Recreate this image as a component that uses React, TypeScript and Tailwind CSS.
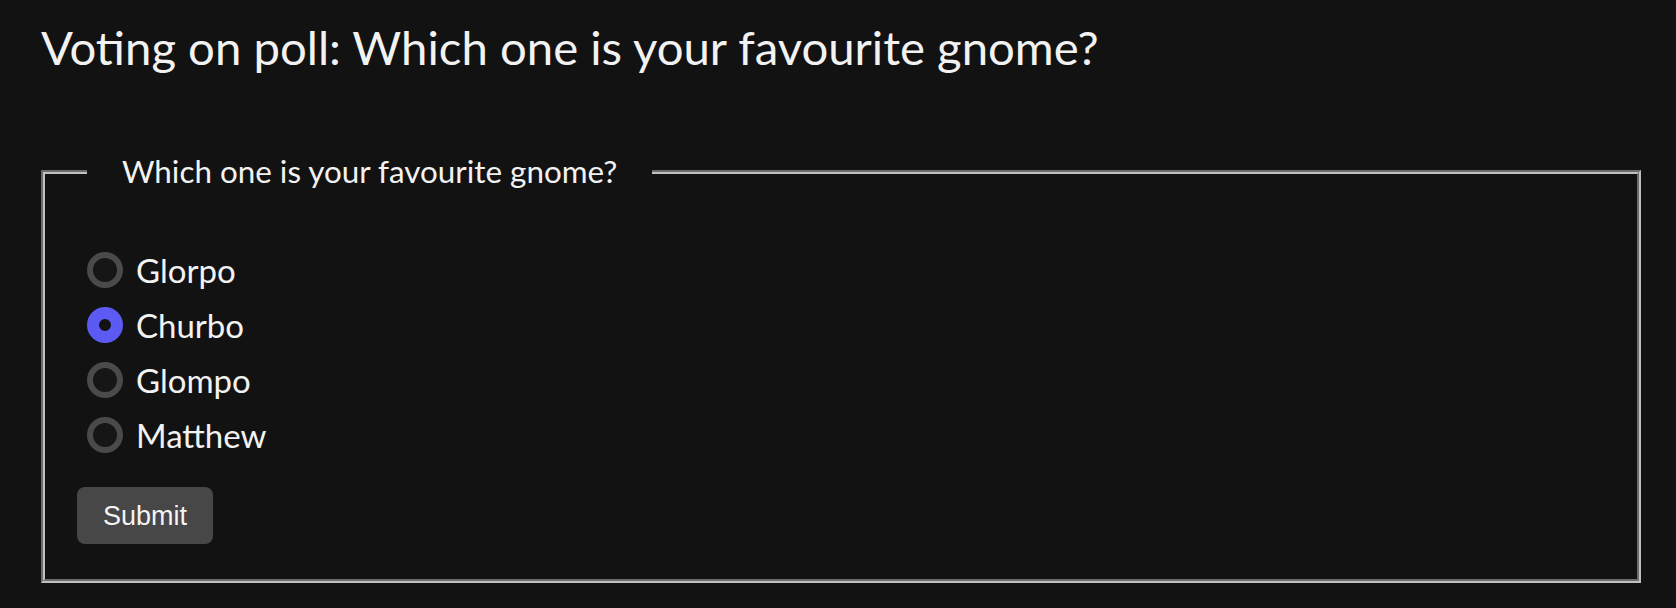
import { useState } from 'react';

const options = ['Glorpo', 'Churbo', 'Glompo', 'Matthew'];

const App = () => {
  const [choice, setChoice] = useState('Churbo');

  return (
    <div className="min-h-screen w-full bg-[#121212] text-[#f2f2f2] pl-[41px] pr-[35px] pt-[19px] font-['Lato','Noto_Sans',sans-serif]">
      <h1 className="text-[47.3px] leading-[1.2] font-normal m-0">
        Voting on poll: Which one is your favourite gnome?
      </h1>

      <form className="mt-[77px]" onSubmit={(e) => e.preventDefault()}>
        <fieldset className="border-[4px] [border-style:groove] border-[#c0c0c0] px-[32px] pt-[60px] pb-[35px] m-0 min-w-0">
          <legend className="text-[31.4px] leading-[1.2] px-[35px] ml-[10px]">
            Which one is your favourite gnome?
          </legend>

          <div className="flex flex-col gap-[15px] pl-[10px]">
            {options.map((opt) => (
              <label key={opt} className="flex items-center h-[40px] gap-[13px] text-[33px] leading-[1.2] cursor-pointer">
                <input
                  type="radio"
                  name="gnome"
                  value={opt}
                  checked={choice === opt}
                  onChange={() => setChoice(opt)}
                  className="appearance-none m-0 shrink-0 w-[36px] h-[36px] rounded-full border-[6px] border-[#4a4a4a] bg-[#161616] checked:border-[12px] checked:border-[#5b5bf3] checked:bg-[#121212]"
                />
                {opt}
              </label>
            ))}
          </div>

          <button
            type="submit"
            className="mt-[32px] w-[136px] h-[57px] rounded-[8px] bg-[#474747] text-[#f4f4f4] text-[27px] font-['Liberation_Sans',Arial,sans-serif]"
          >
            Submit
          </button>
        </fieldset>
      </form>
    </div>
  );
};

export default App;
